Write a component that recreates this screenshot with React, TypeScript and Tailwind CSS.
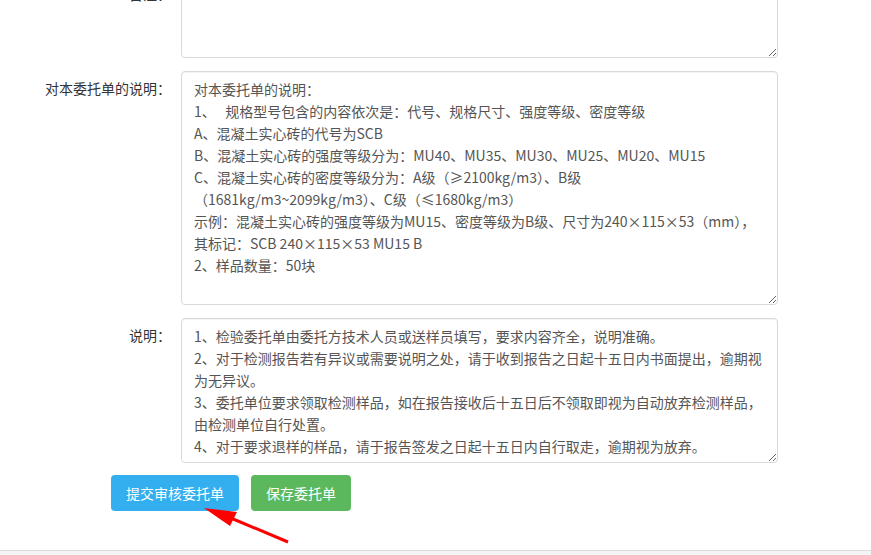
import React from 'react';

const font = {
  fontFamily: '"Noto Sans CJK SC", "Liberation Sans", sans-serif',
};

const remarkText = '';

const entrustText = [
  '对本委托单的说明：',
  '1、   规格型号包含的内容依次是：代号、规格尺寸、强度等级、密度等级',
  'A、混凝土实心砖的代号为SCB',
  'B、混凝土实心砖的强度等级分为：MU40、MU35、MU30、MU25、MU20、MU15',
  'C、混凝土实心砖的密度等级分为：A级（≥2100kg/m3）、B级',
  '（1681kg/m3~2099kg/m3）、C级（≤1680kg/m3）',
  '示例：混凝土实心砖的强度等级为MU15、密度等级为B级、尺寸为240×115×53（mm），',
  '其标记：SCB 240×115×53 MU15 B',
  '2、样品数量：50块',
].join('\n');

const noteText = [
  '1、检验委托单由委托方技术人员或送样员填写，要求内容齐全，说明准确。',
  '2、对于检测报告若有异议或需要说明之处，请于收到报告之日起十五日内书面提出，逾期视',
  '为无异议。',
  '3、委托单位要求领取检测样品，如在报告接收后十五日后不领取即视为自动放弃检测样品，',
  '由检测单位自行处置。',
  '4、对于要求退样的样品，请于报告签发之日起十五日内自行取走，逾期视为放弃。',
].join('\n');

function FormRow({
  label,
  value,
  height,
}: {
  label: string;
  value: string;
  height: string;
}) {
  return (
    <div className="flex items-start">
      <label className="w-[171px] shrink-0 pt-[6px] text-right text-[14px] leading-[22px] text-[#333]">
        {label}
      </label>
      <textarea
        readOnly
        wrap="off"
        value={value}
        className={`ml-[10px] w-[597px] ${height} overflow-hidden whitespace-pre rounded-[4px] border border-[#d9d9d9] bg-white px-[12px] pt-[6px] text-[14px] leading-[22px] text-[#555] shadow-[inset_0_1px_1px_rgba(0,0,0,0.05)] outline-none`}
        style={font}
      />
    </div>
  );
}

export default function App() {
  return (
    <div className="relative h-[555px] w-[871px] overflow-hidden bg-white" style={font}>
      <div className="mt-[-23px] flex flex-col gap-[13px]">
        <FormRow label="备注：" value={remarkText} height="h-[81px]" />
        <FormRow label="对本委托单的说明：" value={entrustText} height="h-[234px]" />
        <FormRow label="说明：" value={noteText} height="h-[145px]" />
        <div className="-mt-px flex gap-[12px] pl-[111px]">
          <button className="h-[36px] rounded-[4px] bg-[#33aeee] px-[15px] text-[14px] text-white">
            提交审核委托单
          </button>
          <button className="h-[36px] rounded-[4px] bg-[#5cb85c] px-[15px] text-[14px] text-white">
            保存委托单
          </button>
        </div>
      </div>

      <div className="absolute bottom-0 left-0 h-[5px] w-full border-t border-[#dcdcdc] bg-[#f4f4f4]" />

      <svg
        className="pointer-events-none absolute left-0 top-0"
        width="871"
        height="555"
        viewBox="0 0 871 555"
      >
        <line x1="288" y1="542" x2="226" y2="516" stroke="#ff0000" strokeWidth="3" />
        <polygon points="204,508 237,512 230,526" fill="#ff0000" />
      </svg>
    </div>
  );
}
